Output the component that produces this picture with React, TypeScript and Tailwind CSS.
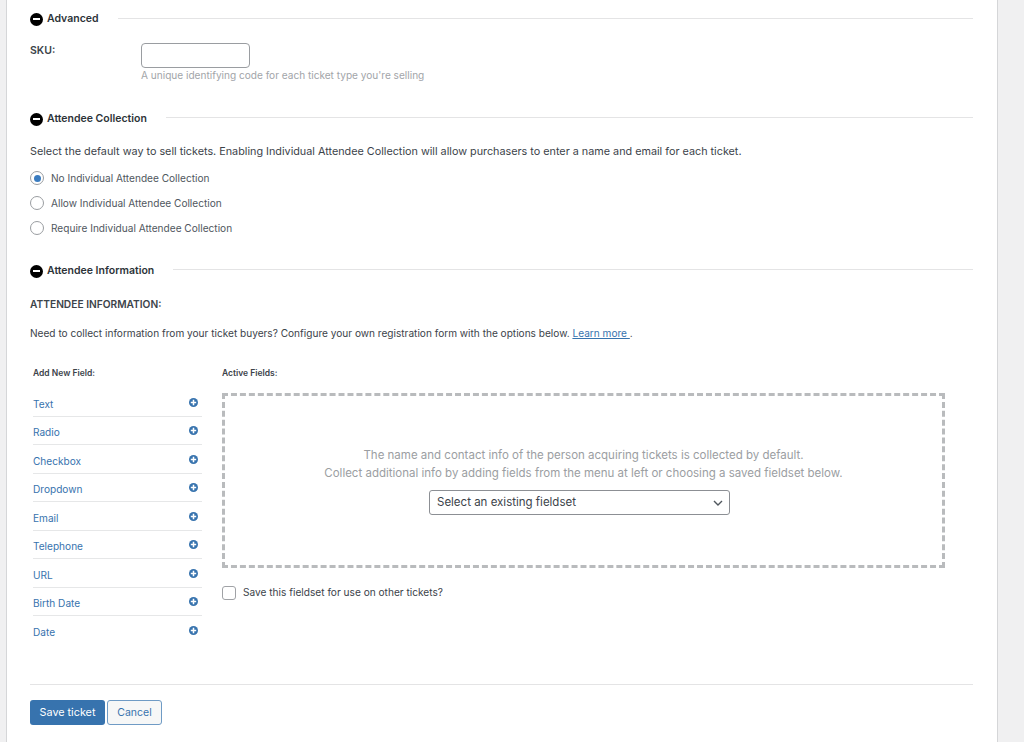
import React from 'react';

const fields = ['Text', 'Radio', 'Checkbox', 'Dropdown', 'Email', 'Telephone', 'URL', 'Birth Date', 'Date'];
const radios = ['No Individual Attendee Collection', 'Allow Individual Attendee Collection', 'Require Individual Attendee Collection'];

const SectionHeader = ({ title, className, lineClass = '' }: { title: string; className: string; lineClass?: string }) => (
  <div className={`flex items-center h-[14px] ${className}`}>
    <span className="w-[13px] h-[13px] mt-[2px] rounded-full bg-black flex items-center justify-center shrink-0">
      <span className="w-[7px] h-[2px] bg-white" />
    </span>
    <span className="ml-[4px] mt-[1px] text-[10.5px] font-semibold text-[#2c3338]">{title}</span>
    <span className={`ml-[19px] flex-1 h-px bg-[#e4e4e5] ${lineClass}`} />
  </div>
);

const PlusIcon = () => (
  <svg width="9" height="9" viewBox="0 0 10 10" className="mt-[1px]">
    <circle cx="5" cy="5" r="5" fill="#3773ae" />
    <path d="M5 2v6M2 5h6" stroke="#fff" strokeWidth="1.7" />
  </svg>
);

export default function App() {
  return (
    <div className="h-[742px] overflow-hidden bg-[#f0f0f1] font-['Inter','Liberation_Sans',sans-serif]">
      <div className="ml-[6px] w-[992px] h-[742px] bg-white border-x border-[#d5d6d8] pl-[23px] pr-[24px] pt-[11px]">
        <SectionHeader title="Advanced" className="" />

        <div className="flex mt-[18px]">
          <div className="w-[111px] text-[10.5px] font-semibold text-[#3c434a]">SKU:</div>
          <div>
            <div className="w-[109px] h-[25px] rounded-[4px] border border-[#9a9da1] bg-white" />
            <div className="text-[10.08px] leading-[14px] text-[#a2a5a9]">A unique identifying code for each ticket type you're selling</div>
          </div>
        </div>

        <SectionHeader title="Attendee Collection" className="mt-[29px]" lineClass="mt-[-2px]" />
        <p className="mt-[20px] text-[10.8px] leading-[14px] text-[#3c434a]">
          Select the default way to sell tickets. Enabling Individual Attendee Collection will allow purchasers to enter a name and email for each ticket.
        </p>
        <div className="mt-[13px] flex flex-col gap-[11px]">
          {radios.map((label, i) => (
            <div key={label} className="flex items-center h-[14px] text-[10.1px] text-[#50575e]">
              <span className="mt-[-2px] w-[14px] h-[14px] rounded-full border border-[#9a9da1] flex items-center justify-center shrink-0">
                {i === 0 && <span className="w-[7px] h-[7px] rounded-full bg-[#3a7cc0]" />}
              </span>
              <span className="ml-[7px]">{label}</span>
            </div>
          ))}
        </div>

        <SectionHeader title="Attendee Information" className="mt-[27px]" lineClass="mt-[-2px]" />
        <div className="mt-[20px] text-[10.2px] leading-[14px] font-semibold text-[#3c434a]">ATTENDEE INFORMATION:</div>
        <p className="mt-[15px] text-[10.1px] leading-[14px] text-[#3c434a]">
          Need to collect information from your ticket buyers? Configure your own registration form with the options below. <a className="text-[#3773ae] underline">Learn more </a>.
        </p>

        <div className="flex mt-[27px]">
          <div className="ml-[3px] w-[169px]">
            <div className="text-[8.5px] leading-[12px] font-semibold text-[#3c434a]">Add New Field:</div>
            {fields.map((f, i) => (
              <div key={f} className={`flex justify-between items-center h-[28.5px] pr-[4px] ${i === 0 ? 'mt-[9px]' : ''} ${i < fields.length - 1 ? 'border-b border-[#e6e7e8]' : ''}`}>
                <span className="text-[10.1px] text-[#3773ae] pt-[5px]">{f}</span>
                <PlusIcon />
              </div>
            ))}
          </div>
          <div className="ml-[20px] w-[723px]">
            <div className="text-[8.5px] leading-[12px] font-semibold text-[#3c434a]">Active Fields:</div>
            <div className="mt-[14px] h-[175px] border-[3px] border-dashed border-[#b9bbbd] flex flex-col items-center pt-[50px]">
              <div className="text-[11.5px] leading-[18px] text-[#9b9ea2] text-center">
                The name and contact info of the person acquiring tickets is collected by default.
                <br />
                Collect additional info by adding fields from the menu at left or choosing a saved fieldset below.
              </div>
              <div className="mt-[8px] mr-[8px] w-[301px] h-[25px] rounded-[3px] border border-[#8c8f94] flex items-center justify-between pl-[7px] pr-[6px] text-[11.5px] text-[#3c434a]">
                <span className="pt-[1px]">Select an existing fieldset</span>
                <svg width="10" height="6" viewBox="0 0 10 6" fill="none" stroke="#50575e" strokeWidth="1.4"><path d="M1 1l4 4 4-4" /></svg>
              </div>
            </div>
            <div className="mt-[17px] flex items-center text-[10.15px] text-[#3c434a]">
              <span className="w-[14px] h-[14px] rounded-[3px] border border-[#a0a2a6] shrink-0" />
              <span className="ml-[7px]">Save this fieldset for use on other tickets?</span>
            </div>
          </div>
        </div>

        <div className="mt-[39px] border-t border-[#e4e4e5]" />
        <div className="mt-[15px] flex gap-[2px]">
          <div className="w-[75px] h-[25px] pt-[2px] rounded-[3px] bg-[#3773ae] text-white text-[10.8px] flex items-center justify-center">Save ticket</div>
          <div className="w-[55px] h-[25px] pt-[1px] rounded-[3px] border border-[#6f9bc5] bg-[#f6f7f7] text-[#3773ae] text-[10.5px] flex items-center justify-center">Cancel</div>
        </div>
      </div>
    </div>
  );
}
